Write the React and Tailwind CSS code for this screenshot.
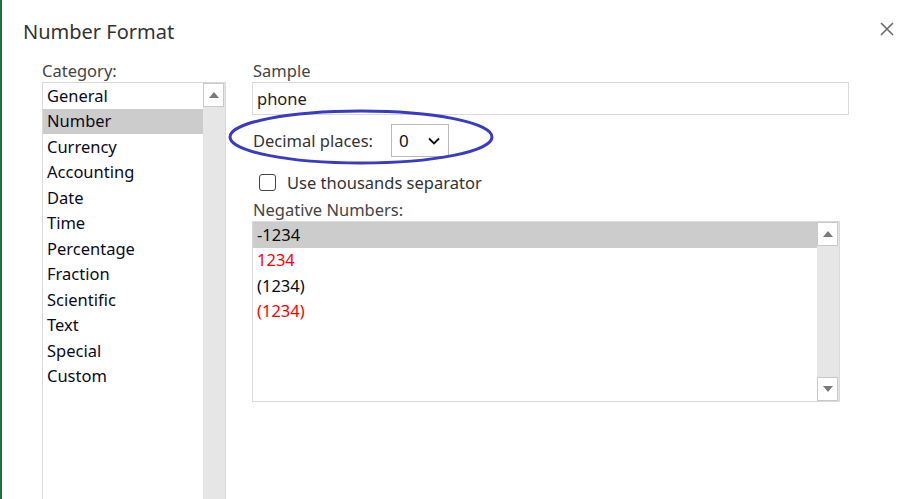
const categories = [
  "General",
  "Number",
  "Currency",
  "Accounting",
  "Date",
  "Time",
  "Percentage",
  "Fraction",
  "Scientific",
  "Text",
  "Special",
  "Custom",
];

const negatives = [
  { text: "-1234", red: false },
  { text: "1234", red: true },
  { text: "(1234)", red: false },
  { text: "(1234)", red: true },
];

const ArrowUp = () => (
  <svg width="10" height="6" viewBox="0 0 10 6">
    <path d="M0 6 L5 0 L10 6 Z" fill="#7a7a7a" />
  </svg>
);

const ArrowDown = () => (
  <svg width="10" height="6" viewBox="0 0 10 6">
    <path d="M0 0 L5 6 L10 0 Z" fill="#7a7a7a" />
  </svg>
);

const ScrollButton = ({ children }) => (
  <div className="w-[21px] h-[24px] bg-white border border-[#c9c9c9] flex items-center justify-center">
    {children}
  </div>
);

const App = () => {
  const font = { fontFamily: "'Noto Sans', 'Open Sans', sans-serif" };

  return (
    <div
      className="relative w-[922px] h-[499px] bg-white border-l-2 border-[#1d7044] overflow-hidden flex flex-col"
      style={font}
    >
      {/* header */}
      <div className="flex items-start justify-between h-[63px] pl-[21px] pr-[28px] pt-[18px]">
        <div className="text-[20px] leading-[28px] text-[#333333]">Number Format</div>
        <svg width="14" height="14" viewBox="0 0 14 14" className="mt-[4px]">
          <path d="M1 1 L13 13 M13 1 L1 13" stroke="#6b6b6b" strokeWidth="1.6" />
        </svg>
      </div>

      <div className="flex flex-1 min-h-0 pl-[40px]">
        {/* category column */}
        <div className="w-[184px] flex flex-col">
          <div className="text-[16.5px] leading-[15px] pb-[4px] text-[#444444]">Category:</div>
          <div className="flex-1 flex border border-[#dadada] border-b-0">
            <div className="flex-1 flex flex-col">
              {categories.map((c) => (
                <div
                  key={c}
                  className={`h-[25.5px] flex items-center pl-[4px] pt-[1px] text-[16.5px] text-[#0a0a1a] ${
                    c === "Number" ? "bg-[#cccccc]" : ""
                  }`}
                >
                  {c}
                </div>
              ))}
            </div>
            <div className="w-[22px] bg-[#e6e6e6] flex flex-col">
              <ScrollButton>
                <ArrowUp />
              </ScrollButton>
            </div>
          </div>
        </div>

        {/* options */}
        <div className="ml-[26px] flex flex-col">
          <div className="text-[16.5px] leading-[15px] pb-[4px] text-[#444444] pl-[1px]">Sample</div>
          <div className="w-[597px] h-[33px] border border-[#dadada] flex items-center pl-[4px] pt-[1px] text-[16.5px] text-[#222222]">
            phone
          </div>

          <div className="flex items-center mt-[9px] h-[33px]">
            <div className="w-[139px] pl-[1px] pt-[1px] text-[16.5px] text-[#333333]">Decimal places:</div>
            <div className="w-[58px] h-[33px] border border-[#b9b9b9] flex items-center justify-between pl-[7px] pr-[8px] text-[17px] text-[#111111]">
              <span>0</span>
              <svg width="12" height="8" viewBox="0 0 12 8">
                <path d="M1 1.5 L6 6.5 L11 1.5" stroke="#111" strokeWidth="1.8" fill="none" />
              </svg>
            </div>
          </div>

          <div className="flex items-center mt-[15px] h-[21px] pl-[7px]">
            <div className="w-[17px] h-[17px] rounded-[3px] border-[1.5px] border-[#444444] bg-white" />
            <div className="ml-[11px] pt-[1px] text-[16.5px] text-[#333333]">Use thousands separator</div>
          </div>

          <div className="mt-[9px] text-[16.5px] leading-[15px] pb-[4px] text-[#444444] pl-[1px]">Negative Numbers:</div>
          <div className="w-[588px] h-[181px] border border-[#dadada] flex">
            <div className="flex-1 flex flex-col">
              {negatives.map((n, i) => (
                <div
                  key={i}
                  className={`h-[25.5px] flex items-center pl-[4px] pt-[1px] text-[16.5px] ${
                    n.red ? "text-[#ff0000]" : "text-[#0a0a0a]"
                  } ${i === 0 ? "bg-[#cccccc]" : ""}`}
                >
                  {n.text}
                </div>
              ))}
            </div>
            <div className="w-[22px] bg-[#e6e6e6] flex flex-col justify-between">
              <ScrollButton>
                <ArrowUp />
              </ScrollButton>
              <ScrollButton>
                <ArrowDown />
              </ScrollButton>
            </div>
          </div>
        </div>
      </div>

      {/* annotation ellipse */}
      <svg className="absolute left-0 top-0 pointer-events-none" width="922" height="499">
        <ellipse cx="359" cy="137" rx="131" ry="26" stroke="#3a3ac4" strokeWidth="3" fill="none" />
      </svg>
    </div>
  );
};

export default App;
